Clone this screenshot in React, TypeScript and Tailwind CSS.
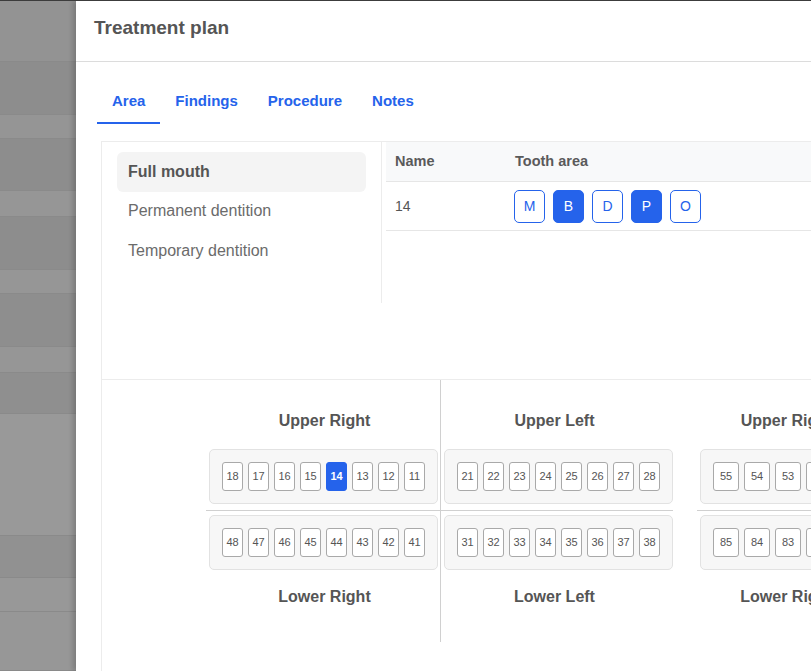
import React, { useState } from 'react';

const bands = [
  { h: 62, c: 'bg-[#939393]' },
  { h: 54, c: 'bg-[#8d8d8d]' },
  { h: 24, c: 'bg-[#959595]' },
  { h: 53, c: 'bg-[#8d8d8d]' },
  { h: 26, c: 'bg-[#969696]' },
  { h: 54, c: 'bg-[#8d8d8d]' },
  { h: 24, c: 'bg-[#969696]' },
  { h: 54, c: 'bg-[#8e8e8e]' },
  { h: 26, c: 'bg-[#969696]' },
  { h: 42, c: 'bg-[#8f8f8f]' },
  { h: 123, c: 'bg-[#999999]' },
  { h: 43, c: 'bg-[#919191]' },
  { h: 34, c: 'bg-[#989898]' },
  { h: 60, c: 'bg-[#979797]' },
];

const areas = ['M', 'B', 'D', 'P', 'O'];

interface Quadrant {
  upper: string;
  lower: string;
  top: number[];
  bottom: number[];
  wide?: boolean;
}

const quadrants: Quadrant[] = [
  { upper: 'Upper Right', lower: 'Lower Right', top: [18, 17, 16, 15, 14, 13, 12, 11], bottom: [48, 47, 46, 45, 44, 43, 42, 41] },
  { upper: 'Upper Left', lower: 'Lower Left', top: [21, 22, 23, 24, 25, 26, 27, 28], bottom: [31, 32, 33, 34, 35, 36, 37, 38] },
  { upper: 'Upper Right', lower: 'Lower Right', top: [55, 54, 53, 52, 51], bottom: [85, 84, 83, 82, 81], wide: true },
  { upper: 'Upper Left', lower: 'Lower Left', top: [61, 62, 63, 64, 65], bottom: [71, 72, 73, 74, 75], wide: true },
];

// title offsets so labels sit where the reference has them
const titlePad = ['pl-[3px]', 'pr-[5px]', 'pr-[3px]', 'pr-[3px]'];

function ToothRow({ teeth, wide, selected, onPick }: { teeth: number[]; wide?: boolean; selected: number[]; onPick: (n: number) => void }) {
  return (
    <div className="ml-[3px] flex w-max gap-[5px] rounded-[5px] border border-[#e2e2e2] bg-[#f7f7f7] px-[12px] py-[12px]">
      {teeth.map(n => {
        const on = selected.includes(n);
        return (
          <button
            key={n}
            onClick={() => onPick(n)}
            className={`flex h-[29px] items-center justify-center rounded-[3px] border text-[11px] ${wide ? 'w-[26px]' : 'w-[21px]'} ${
              on ? 'border-[#2563eb] bg-[#2563eb] font-bold text-white' : 'border-[#a9a9a9] bg-white text-[#555]'
            }`}
          >
            {n}
          </button>
        );
      })}
    </div>
  );
}

export default function App() {
  const [tab, setTab] = useState('Area');
  const [menu, setMenu] = useState('Full mouth');
  const [picked, setPicked] = useState<string[]>(['B', 'P']);
  const [teeth, setTeeth] = useState<number[]>([14]);

  const toggleArea = (a: string) =>
    setPicked(p => (p.includes(a) ? p.filter(x => x !== a) : [...p, a]));
  const toggleTooth = (n: number) =>
    setTeeth(t => (t.includes(n) ? t.filter(x => x !== n) : [...t, n]));

  return (
    <div className="flex h-[671px] w-full overflow-hidden border-t border-[#3c3c3c] font-['Liberation_Sans',Arial,sans-serif]">
      {/* dimmed page behind the drawer */}
      <div className="flex w-[76px] shrink-0 flex-col">
        {bands.map((b, i) => (
          <div key={i} className={`${b.c} border-b border-[#8a8a8a]`} style={{ height: b.h }} />
        ))}
      </div>

      <div className="flex min-w-0 flex-1 flex-col bg-white shadow-[-3px_0_5px_rgba(0,0,0,0.18)]">
        <div className="h-[61px] shrink-0 border-b border-[#dcdcdc] px-[18px] pt-[15px]">
          <h1 className="text-[19px] font-bold leading-[24px] text-[#555]">Treatment plan</h1>
        </div>

        <div className="flex pl-[21px] pt-[18px]">
          {['Area', 'Findings', 'Procedure', 'Notes'].map(t => (
            <button
              key={t}
              onClick={() => setTab(t)}
              className={`border-b-2 px-[15px] pt-[11px] pb-[11px] text-[15px] font-bold leading-[20px] text-[#2563eb] ${
                tab === t ? 'border-[#2563eb]' : 'border-transparent'
              }`}
            >
              {t}
            </button>
          ))}
        </div>

        <div className="ml-[25px] mt-[17px] flex w-[900px] flex-1 flex-col border-l border-t border-[#ececec]">
          <div className="flex h-[237px]">
            <div className="h-[161px] w-[280px] shrink-0 border-r border-[#ececec] px-[15px] pt-[10px]">
              {['Full mouth', 'Permanent dentition', 'Temporary dentition'].map(m => (
                <div
                  key={m}
                  onClick={() => setMenu(m)}
                  className={`flex h-[39.5px] cursor-pointer items-center rounded-[6px] px-[11px] text-[16px] ${
                    menu === m ? 'bg-[#f4f4f4] font-bold text-[#555]' : 'text-[#6b6b6b]'
                  }`}
                >
                  {m}
                </div>
              ))}
            </div>

            <div className="ml-[4px] flex-1">
              <div className="flex h-[40px] items-center border-b border-[#e6e6e6] bg-[#f8f9fa] text-[14.5px] font-bold text-[#5a5a5a]">
                <div className="w-[120px] px-[9px]">Name</div>
                <div className="px-[9px]">Tooth area</div>
              </div>
              <div className="flex h-[49px] items-center border-b border-[#e6e6e6] text-[14px] text-[#555]">
                <div className="w-[120px] px-[9px]">14</div>
                <div className="flex gap-[8px] px-[8px]">
                  {areas.map(a => {
                    const on = picked.includes(a);
                    return (
                      <button
                        key={a}
                        onClick={() => toggleArea(a)}
                        className={`flex h-[33px] w-[31px] items-center justify-center rounded-[5px] border border-[#2563eb] text-[14px] ${
                          on ? 'bg-[#2563eb] text-white' : 'bg-white text-[#2563eb]'
                        }`}
                      >
                        {a}
                      </button>
                    );
                  })}
                </div>
              </div>
            </div>
          </div>

          <div className="flex flex-1 border-t border-[#ececec]">
            {quadrants.map((q, i) => (
              <div
                key={i}
                className={`flex shrink-0 flex-col self-start pt-[29px] pb-[33px] ${
                  i === 0 ? 'ml-[104px] w-[235px] border-r border-[#d0d0d0]' : i === 1 ? 'w-[232px]' : 'ml-[24px] w-[182px]'
                }`}
              >
                <div className={`${titlePad[i]} text-center text-[16px] font-bold leading-[24px] text-[#555]`}>{q.upper}</div>
                <div className="mt-[16px]">
                  <ToothRow teeth={q.top} wide={q.wide} selected={teeth} onPick={toggleTooth} />
                </div>
                <div className="mt-[6px] mb-[4px] h-px bg-[#d0d0d0]" />
                <ToothRow teeth={q.bottom} wide={q.wide} selected={teeth} onPick={toggleTooth} />
                <div className={`mt-[15px] ${titlePad[i]} text-center text-[16px] font-bold leading-[24px] text-[#555]`}>{q.lower}</div>
              </div>
            ))}
          </div>
        </div>
      </div>
    </div>
  );
}
